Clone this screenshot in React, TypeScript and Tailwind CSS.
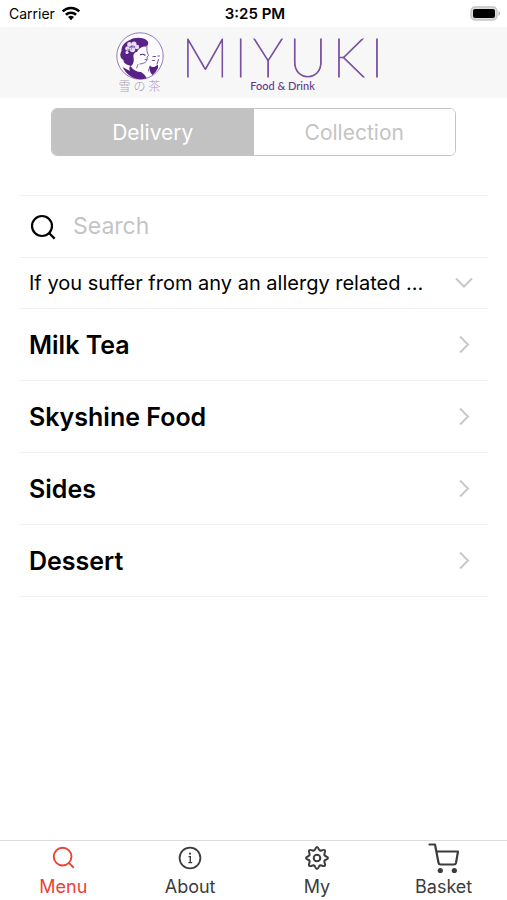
import { useState } from "react";

const categories = ["Milk Tea", "Skyshine Food", "Sides", "Dessert"];

function WifiIcon() {
  return (
    <svg className="h-4 w-5" viewBox="0 0 20 16" fill="none" stroke="#000" strokeWidth="2.6" aria-hidden="true">
      <path d="M1.7 5.4a11.8 11.8 0 0 1 16.6 0" />
      <path d="M4.9 8.8a7.3 7.3 0 0 1 10.2 0" />
      <path d="M10 14.2l-3-3.1a4.3 4.3 0 0 1 6 0z" fill="#000" stroke="none" />
    </svg>
  );
}

function BatteryIcon() {
  return (
    <svg className="h-4 w-8" viewBox="0 0 32 16" aria-hidden="true">
      <rect x="2" y="1" width="26" height="13" rx="4" fill="#ddd" stroke="#c4c4c4" strokeWidth="1.4" />
      <rect x="4" y="3" width="22" height="9" rx="2" fill="#000" />
      <path d="M29.500 5c2 .8 2 4.200 0 5z" fill="#b4b4b4" />
    </svg>
  );
}

function SearchIcon({ className, strokeWidth }: { className: string; strokeWidth: number }) {
  return (
    <svg className={className} viewBox="0 0 26 26" fill="none" stroke="currentColor" strokeWidth={strokeWidth} aria-hidden="true">
      <circle cx="12" cy="12" r="10" />
      <path d="M18.800 18.800l5.800 5.800" />
    </svg>
  );
}

function InfoIcon() {
  return (
    <svg className="h-8 w-8" viewBox="0 0 32 32" fill="none" stroke="currentColor" strokeWidth="1.8" aria-hidden="true">
      <circle cx="16" cy="16" r="10.4" />
      <path d="M14.500 14.600h1.800v6M14.400 20.600h3.800" strokeWidth="1.400" />
      <circle cx="16" cy="11.700" r="1.100" fill="currentColor" stroke="none" />
    </svg>
  );
}

function GearIcon() {
  return (
    <svg className="h-8 w-8" viewBox="0 0 32 32" fill="none" stroke="currentColor" strokeWidth="2" strokeLinejoin="round" aria-hidden="true">
      <path d="M14.2 7.2Q16 2.8 17.8 7.2Q18.4 9.1 20.5 8.5Q25.6 6.4 23.5 11.5Q22.9 13.6 24.8 14.2Q29.2 16 24.8 17.8Q22.9 18.4 23.5 20.5Q25.6 25.6 20.5 23.5Q18.4 22.9 17.8 24.8Q16 29.2 14.2 24.8Q13.6 22.9 11.5 23.5Q6.4 25.6 8.5 20.5Q9.1 18.4 7.2 17.8Q2.8 16 7.2 14.2Q9.1 13.6 8.5 11.5Q6.4 6.4 11.5 8.5Q13.6 9.1 14.2 7.2Z" />
      <circle cx="16" cy="16" r="3.3" />
    </svg>
  );
}

function CartIcon() {
  return (
    <svg className="h-8 w-8" viewBox="0 0 32 32" fill="none" stroke="currentColor" strokeWidth="2.200" strokeLinecap="round" strokeLinejoin="round" aria-hidden="true">
      <path d="M1.500 2.500H7l3.500 18.300q.3 1.700 2 1.700h13.500q1.600 0 2-1.600L30 9.500H8.500" />
      <circle cx="12.300" cy="28.500" r="2.600" fill="currentColor" stroke="none" />
      <circle cx="26.300" cy="28.500" r="2.600" fill="currentColor" stroke="none" />
    </svg>
  );
}

function Chevron({ down = false }: { down?: boolean }) {
  return (
    <svg className="h-5 w-5 shrink-0" viewBox="0 0 20 20" fill="none" stroke="#c7c7cc" strokeWidth="2" aria-hidden="true">
      <path d={down ? "M2 5.500l8 8 8-8" : "M6 1.500l8 8-8 8"} />
    </svg>
  );
}

function Emblem() {
  return (
    <div className="flex w-12 flex-col items-center">
      <svg className="h-12 w-12" viewBox="0 0 48 48" aria-hidden="true">
        <circle cx="24" cy="24" r="23.200" fill="#fdfcfe" stroke="#9a78bb" strokeWidth="1" />
        <g fill="#572186">
          <path d="M14 8C18 5 28 5 31.500 9C33 11 32 14 30 14.500C26 14 22 17 21 20C19 20 17 22 17.500 25C18 28 18 32 15 34C11 33 7 31 7.500 28C4 26 3.500 22 5.500 19C5 14 9 10 14 8Z" />
          <path d="M6.500 35L14 39C13 37 13 35 14.500 34C17 38 21 40 25 40C28 42 30 44 30.500 46.300C20 49.500 11 44 6.500 35Z" />
          <path d="M34 34C36.500 36 39.500 35 42 32.500L42 36L39.500 40L36.500 43C34 41 33 37 34 34Z" />
        </g>
        <g fill="none" stroke="#572186" strokeLinecap="round">
          <path d="M31 14.500C30.500 18 31 20 32.500 23.500L31 25L31.300 27C30.500 30.500 28 31.500 24 32M22 32.500L20.500 36" strokeWidth="0.7" />
          <path d="M24.500 22.800Q27 21.500 29 23.200" strokeWidth="1.200" />
          <path d="M29 27.500h1.800" stroke="#8d5fae" strokeWidth="1" />
          <path d="M37 24.500h2.500M42 24h1.500M36.500 28.500h2M42.500 27.500L41 32M34 34l-1.500 5" strokeWidth="0.800" />
        </g>
        <g fill="#e9def2">
          <circle cx="13.500" cy="12.500" r="2.400" />
          <circle cx="18" cy="12" r="2.500" />
          <circle cx="21" cy="15" r="2.200" />
          <circle cx="16.500" cy="17.500" r="2.700" />
          <circle cx="11.500" cy="16.500" r="2.300" />
          <circle cx="11" cy="20.500" r="1.600" />
        </g>
        <path d="M13.500 14.500l5 1M17 13l-2 5M11 17l3 1" stroke="#8d6aae" strokeWidth="0.7" />
      </svg>
      <p className="flex w-[42px] justify-between font-['Noto_Sans_CJK_JP',sans-serif] text-[12px] font-light leading-3 text-[#a99bb8]" lang="ja" aria-label="雪の茶">
        <span>雪</span>
        <span>の</span>
        <span>茶</span>
      </p>
    </div>
  );
}

function Brand() {
  return (
    <header className="flex h-[71px] shrink-0 justify-center gap-[18px] bg-[#f7f7f7] pr-2 pt-[5px] font-['Lato','Open_Sans',sans-serif] text-[#65378f]">
      <Emblem />
      <div className="flex w-[202px] flex-col items-center pt-1">
        <div className="flex w-full justify-between text-[53px] font-thin leading-[42px] [-webkit-text-stroke:1px_#7a50a3]" role="img" aria-label="MIYUKI">
          {["M", "I", "Y", "U", "K", "I"].map((letter, index) => (
            <span key={index}>{letter}</span>
          ))}
        </div>
        <p className="text-[11px] font-medium leading-4">Food &amp; Drink</p>
      </div>
    </header>
  );
}

const tabs = [
  { label: "Menu", icon: <SearchIcon className="h-[23px] w-[23px]" strokeWidth={2.2} /> },
  { label: "About", icon: <InfoIcon /> },
  { label: "My", icon: <GearIcon /> },
  { label: "Basket", icon: <CartIcon /> },
];

export default function App() {
  const [mode, setMode] = useState("Delivery");
  const [tab, setTab] = useState("Menu");

  return (
    <div className="flex min-h-screen flex-col bg-white font-['Inter',sans-serif] text-black">
      <div className="grid h-[27px] shrink-0 grid-cols-3 items-center pl-[9px] pr-[6px] text-sm">
        <div className="flex items-center gap-[6px]">
          <span>Carrier</span>
          <WifiIcon />
        </div>
        <span className="text-center text-[15px] font-semibold">3:25 PM</span>
        <div className="flex justify-end">
          <BatteryIcon />
        </div>
      </div>

      <Brand />

      <main className="flex-1 px-[19px]">
        <div className="mx-8 mt-[10px] flex h-12 overflow-hidden rounded-md border border-[#c4c4c4]">
          {["Delivery", "Collection"].map((name) => (
            <button
              key={name}
              type="button"
              aria-pressed={mode === name}
              onClick={() => setMode(name)}
              className={`flex-1 pt-0.5 text-[21px] ${mode === name ? "bg-[#c2c2c2] text-white" : "bg-white text-[#c4c4c4]"}`}
            >
              {name}
            </button>
          ))}
        </div>

        <div className="mt-[39px] border-t border-[#f2f2f2]">
          <label className="flex h-[62px] items-center gap-[17px] border-b border-[#f2f2f2] pl-[11px]">
            <SearchIcon className="h-[26px] w-[26px]" strokeWidth={2.2} />
            <input
              type="search"
              aria-label="Search"
              placeholder="Search"
              className="min-w-0 flex-1 bg-transparent text-[23px] outline-none placeholder:text-[#c4c4c6]"
            />
          </label>
          <button type="button" className="flex h-[51px] w-full items-center justify-between border-b border-[#f2f2f2] pl-[10px] pr-[14px] text-left text-xl">
            <span>If you suffer from any an allergy related ...</span>
            <Chevron down />
          </button>
          {categories.map((name) => (
            <button key={name} type="button" className="flex h-[72px] w-full items-center justify-between border-b border-[#f2f2f2] pl-[10px] pr-[14px] text-left text-[25px] font-semibold">
              <span className="pt-0.5">{name}</span>
              <Chevron />
            </button>
          ))}
        </div>
      </main>

      <nav className="grid h-[60px] shrink-0 grid-cols-4 border-t border-[#dcdcdc]">
        {tabs.map(({ label, icon }) => (
          <button
            key={label}
            type="button"
            onClick={() => setTab(label)}
            className={`flex flex-col items-center text-[18px] leading-[26px] ${tab === label ? "text-[#ee4135]" : "text-[#3c3c3c]"}`}
          >
            <span className="flex h-[33px] items-center justify-center">{icon}</span>
            {label}
          </button>
        ))}
      </nav>
    </div>
  );
}
